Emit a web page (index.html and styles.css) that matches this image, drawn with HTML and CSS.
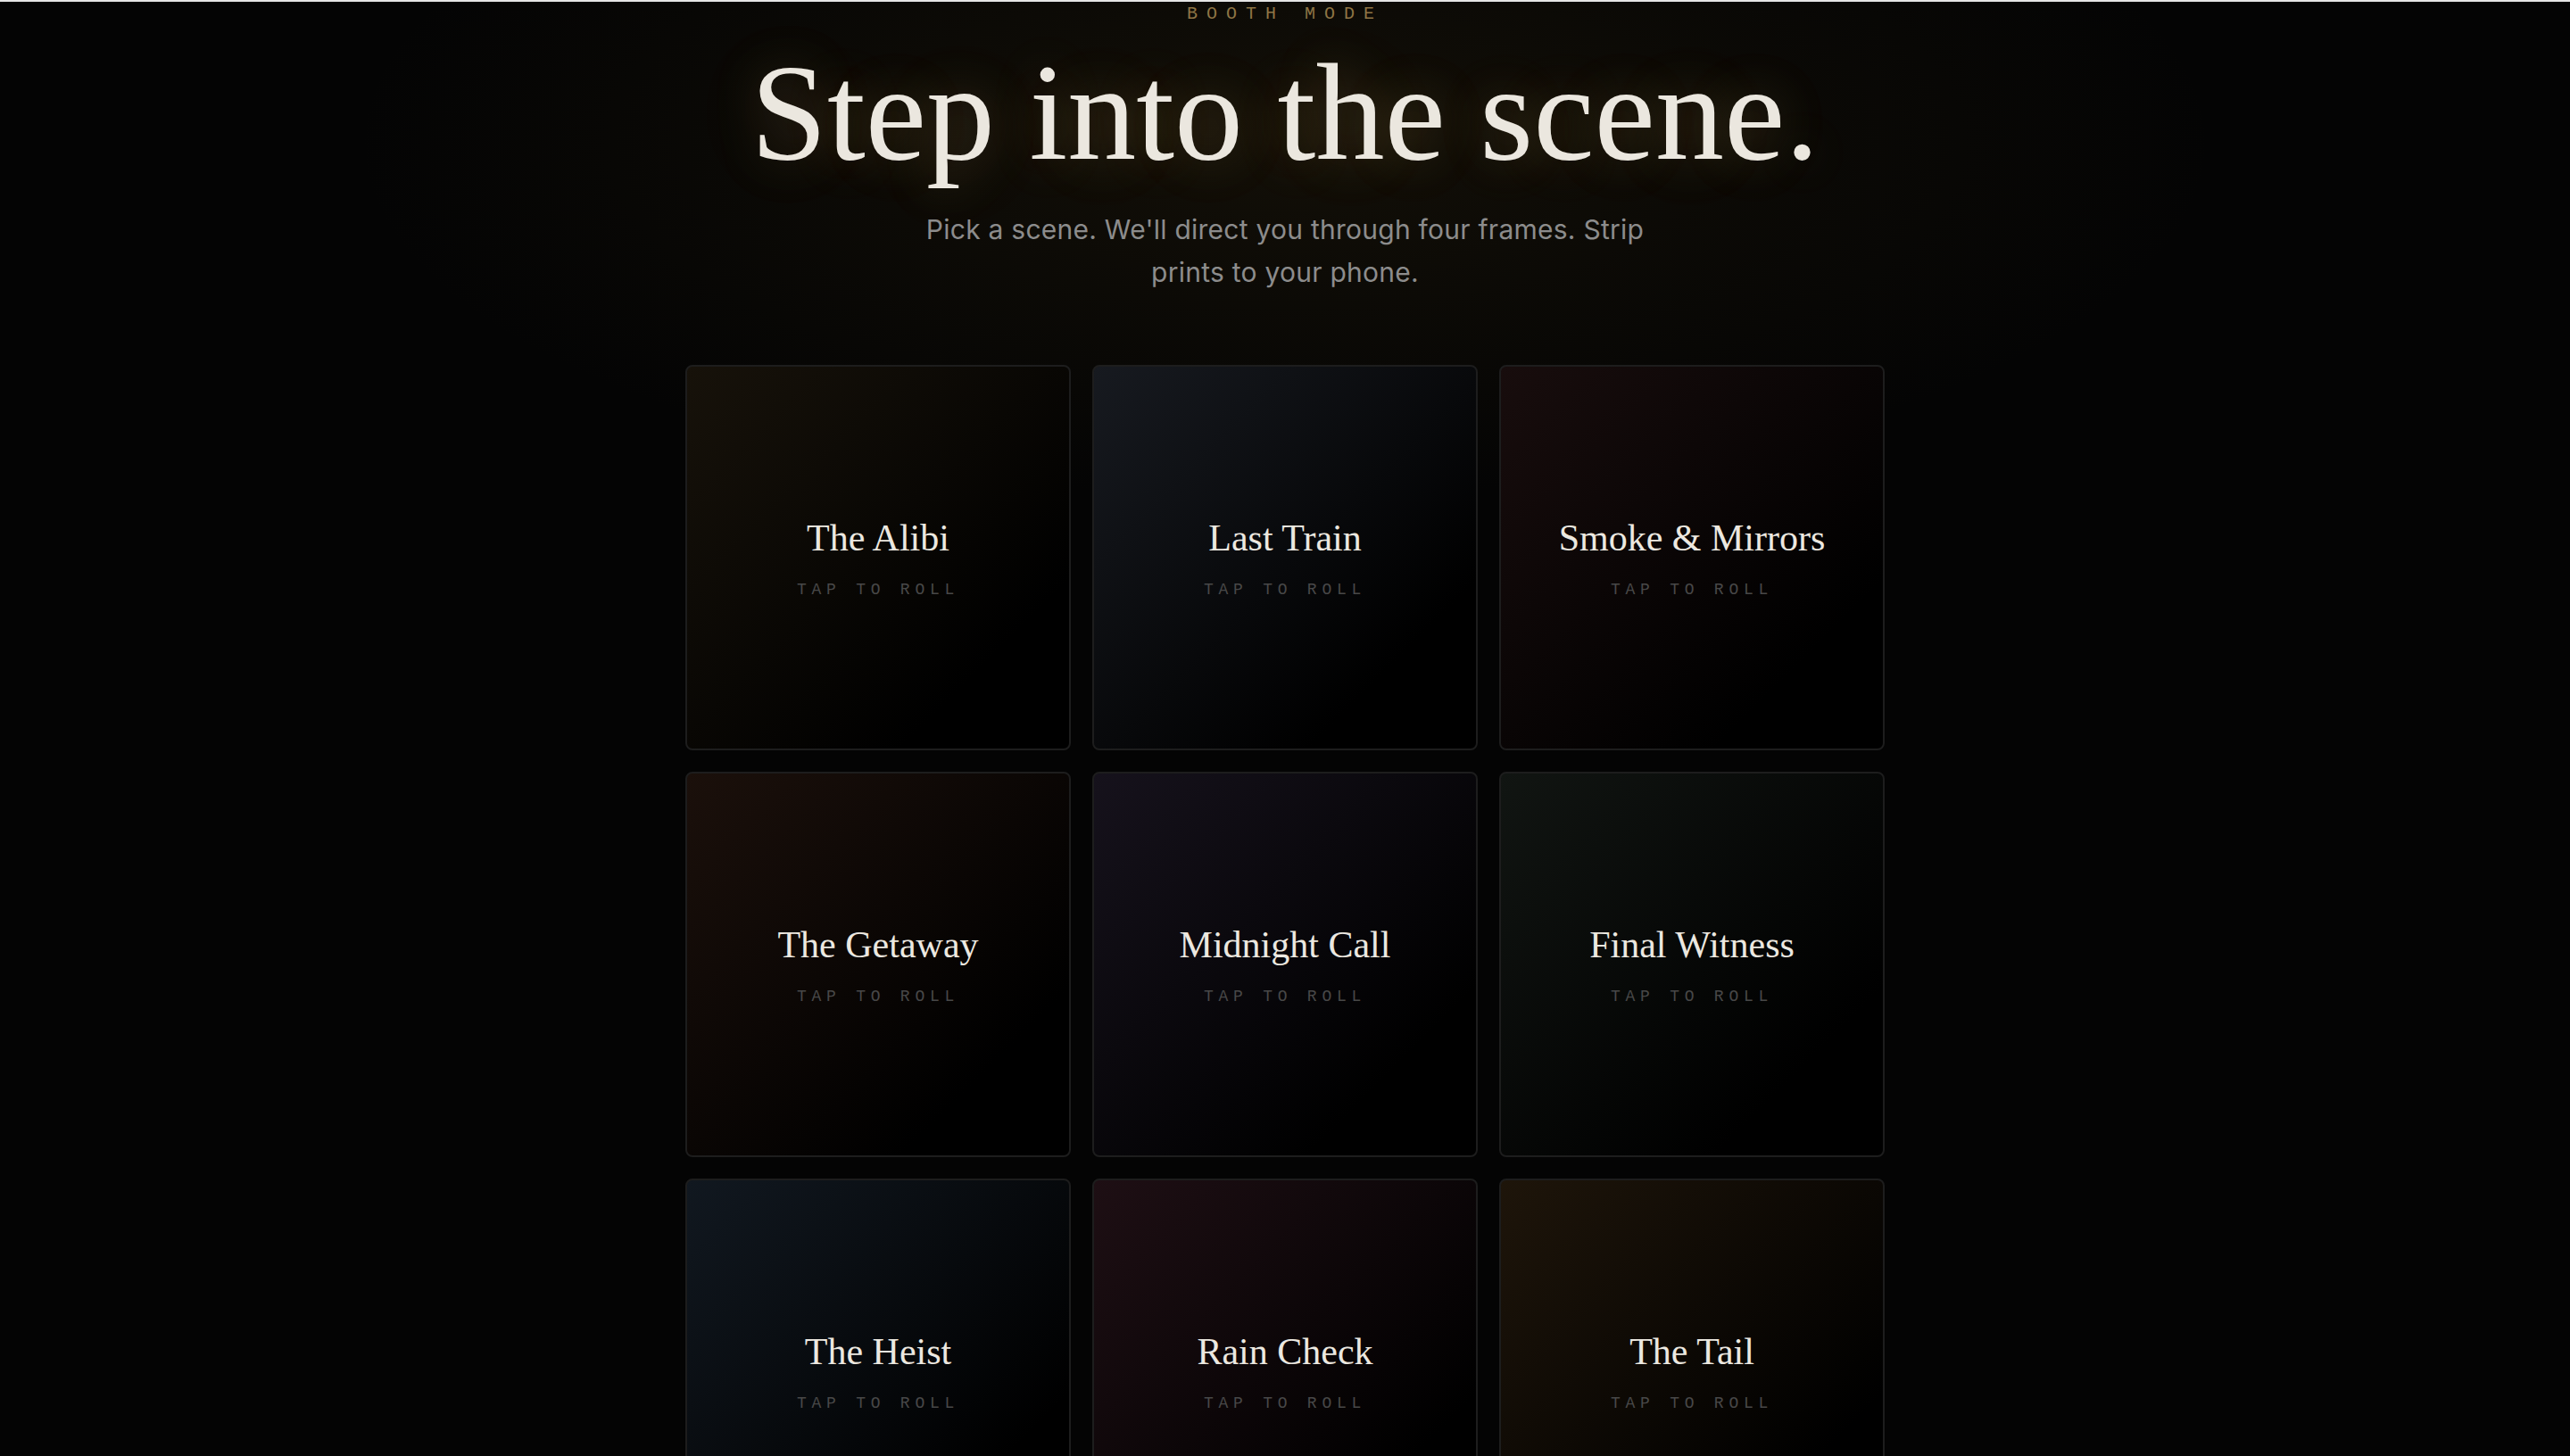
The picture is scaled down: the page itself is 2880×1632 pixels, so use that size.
FILE: index.html
```html
<!DOCTYPE html>
<html lang="en">
<head>
<meta charset="utf-8">
<title>Booth Mode</title>
<link rel="stylesheet" href="styles.css">
</head>
<body>
<main class="page">
  <header class="hero">
    <p class="eyebrow">BOOTH MODE</p>
    <h1 class="title">Step into the scene.</h1>
    <p class="lede">Pick a scene. We'll direct you through four frames. Strip prints to your phone.</p>
  </header>
  <section class="grid">
    <button class="card card-alibi"><span class="card-name">The Alibi</span><span class="card-tap">TAP TO ROLL</span></button>
    <button class="card card-train"><span class="card-name">Last Train</span><span class="card-tap">TAP TO ROLL</span></button>
    <button class="card card-smoke"><span class="card-name">Smoke &amp; Mirrors</span><span class="card-tap">TAP TO ROLL</span></button>
    <button class="card card-getaway"><span class="card-name">The Getaway</span><span class="card-tap">TAP TO ROLL</span></button>
    <button class="card card-midnight"><span class="card-name">Midnight Call</span><span class="card-tap">TAP TO ROLL</span></button>
    <button class="card card-witness"><span class="card-name">Final Witness</span><span class="card-tap">TAP TO ROLL</span></button>
    <button class="card card-heist"><span class="card-name">The Heist</span><span class="card-tap">TAP TO ROLL</span></button>
    <button class="card card-rain"><span class="card-name">Rain Check</span><span class="card-tap">TAP TO ROLL</span></button>
    <button class="card card-tail"><span class="card-name">The Tail</span><span class="card-tap">TAP TO ROLL</span></button>
  </section>
</main>
</body>
</html>
```

FILE: styles.css
```css
html, body {
  margin: 0;
  padding: 0;
}

body {
  border-top: 2px solid #e6e6e6;
  min-height: 100vh;
  background:
    radial-gradient(ellipse 1040px 400px at 50% 160px, rgba(70, 55, 20, 0.22), rgba(0, 0, 0, 0) 100%),
    #040404;
  color: #e9e5dd;
  font-family: "Inter", "Noto Sans", sans-serif;
}

.page {
  display: flex;
  flex-direction: column;
  align-items: center;
}

.hero {
  display: flex;
  flex-direction: column;
  align-items: center;
  text-align: center;
}

.eyebrow {
  margin: 0;
  font-family: "Liberation Mono", "DejaVu Sans Mono", monospace;
  font-size: 20px;
  line-height: 28px;
  letter-spacing: 0.5em;
  color: #8f7545;
}

.title {
  margin: 12px 0 0;
  font-family: "Liberation Serif", "DejaVu Serif", serif;
  font-weight: 400;
  font-size: 154px;
  line-height: 1.1;
  color: #ebe7df;
  text-shadow: 0 0 56px rgba(255, 215, 140, 0.22), 0 0 120px rgba(255, 200, 110, 0.10);
}

.lede {
  margin: 22px 0 0;
  max-width: 860px;
  font-size: 30px;
  line-height: 48px;
  letter-spacing: 0.25px;
  color: #8c8c8c;
}

.grid {
  margin-top: 80px;
  display: grid;
  grid-template-columns: repeat(3, 432px);
  grid-auto-rows: 432px;
  gap: 24px;
}

.card {
  margin: 0;
  padding: 0;
  border: 2px solid #1d1d1d;
  border-radius: 8px;
  display: flex;
  flex-direction: column;
  align-items: center;
  justify-content: center;
  gap: 20px;
  cursor: pointer;
  background: #000;
}

.card-name {
  font-family: "Liberation Serif", "DejaVu Serif", serif;
  font-size: 42px;
  line-height: 1.2;
  color: #ece8e0;
}

.card-tap {
  font-family: "Liberation Mono", "DejaVu Sans Mono", monospace;
  font-size: 18px;
  line-height: 24px;
  letter-spacing: 0.32em;
  color: #484848;
}

.card-alibi    { background: linear-gradient(135deg, #17120a 0%, #000 78%); }
.card-train    { background: linear-gradient(135deg, #171a20 0%, #000 78%); }
.card-smoke    { background: linear-gradient(135deg, #180d0d 0%, #000 78%); }
.card-getaway  { background: linear-gradient(135deg, #1b100b 0%, #000 78%); }
.card-midnight { background: linear-gradient(135deg, #16121c 0%, #000 78%); }
.card-witness  { background: linear-gradient(135deg, #111512 0%, #000 78%); }
.card-heist    { background: linear-gradient(135deg, #111820 0%, #000 78%); }
.card-rain     { background: linear-gradient(135deg, #1e0f14 0%, #000 78%); }
.card-tail     { background: linear-gradient(135deg, #1e150a 0%, #000 78%); }
```
